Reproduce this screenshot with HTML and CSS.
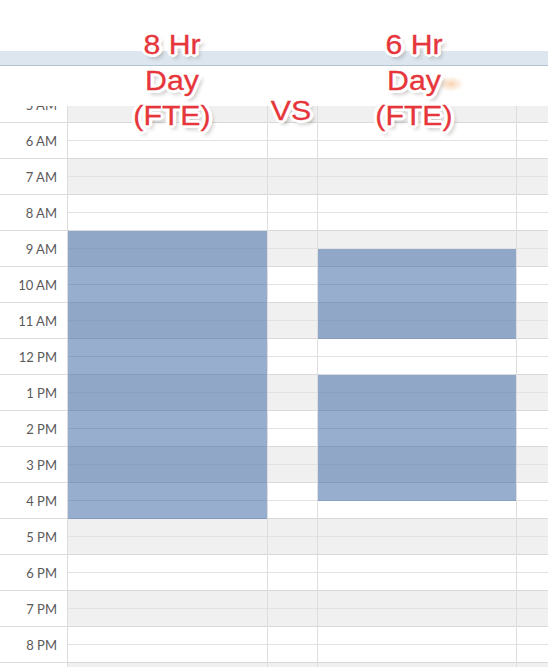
FILE: index.html
```html
<!DOCTYPE html>
<html>
<head>
<meta charset="utf-8">
<link rel="stylesheet" href="styles.css">
</head>
<body>
<div class="page">
  <div class="top"></div>
  <div class="band"></div>
  <div class="gap"></div>
  <div class="cal">
    <div class="inner">
      <div class="times">
        <div class="time">5 AM</div>
        <div class="time">6 AM</div>
        <div class="time">7 AM</div>
        <div class="time">8 AM</div>
        <div class="time">9 AM</div>
        <div class="time">10 AM</div>
        <div class="time">11 AM</div>
        <div class="time">12 PM</div>
        <div class="time">1 PM</div>
        <div class="time">2 PM</div>
        <div class="time">3 PM</div>
        <div class="time">4 PM</div>
        <div class="time">5 PM</div>
        <div class="time">6 PM</div>
        <div class="time">7 PM</div>
        <div class="time">8 PM</div>
        <div class="time">9 PM</div>
      </div>
      <div class="days">
        <div class="hour alt"><div class="half"></div></div>
        <div class="hour"><div class="half"></div></div>
        <div class="hour alt"><div class="half"></div></div>
        <div class="hour"><div class="half"></div></div>
        <div class="hour alt"><div class="half"></div></div>
        <div class="hour"><div class="half"></div></div>
        <div class="hour alt"><div class="half"></div></div>
        <div class="hour"><div class="half"></div></div>
        <div class="hour alt"><div class="half"></div></div>
        <div class="hour"><div class="half"></div></div>
        <div class="hour alt"><div class="half"></div></div>
        <div class="hour"><div class="half"></div></div>
        <div class="hour alt"><div class="half"></div></div>
        <div class="hour"><div class="half"></div></div>
        <div class="hour alt"><div class="half"></div></div>
        <div class="hour"><div class="half"></div></div>
        <div class="hour alt"><div class="half"></div></div>
        <div class="cols">
          <div class="col">
            <div class="event" style="top:144px;height:288px"></div>
          </div>
          <div class="col"></div>
          <div class="col">
            <div class="event" style="top:162px;height:90px"></div>
            <div class="event" style="top:288px;height:126px"></div>
          </div>
          <div class="col last"></div>
        </div>
      </div>
    </div>
  </div>
  <div class="smudge"></div>
  <div class="note note-8">8 Hr<br>Day<br>(FTE)</div>
  <div class="note note-vs">VS</div>
  <div class="note note-6">6 Hr<br>Day<br>(FTE)</div>
</div>
</body>
</html>
```

FILE: styles.css
```css
* { box-sizing: border-box; }
html, body { margin: 0; padding: 0; background: #fff; }
.page {
  position: relative;
  width: 548px;
  height: 667px;
  overflow: hidden;
  font-family: Lato, "Open Sans", sans-serif;
}
.top { height: 51px; background: #fff; }
.band {
  height: 15px;
  background: #dde6ee;
  border-bottom: 1px solid #b3c2d1;
}
.gap { height: 40px; background: #fff; }
.cal {
  height: 561px;
  overflow: hidden;
}
.inner {
  display: flex;
  margin-top: -19px;
}
.times {
  width: 68px;
  flex: none;
  border-right: 1px solid #dcdcdc;
}
.time {
  height: 36px;
  border-bottom: 1px solid #dcdcdc;
  display: flex;
  align-items: center;
  justify-content: flex-end;
  padding-right: 10px;
  font-size: 13px;
  color: #5a5a5a;
}
.days {
  position: relative;
  flex: 1;
}
.hour {
  height: 36px;
  border-bottom: 1px solid #d9d9d9;
  background: #fff;
}
.hour.alt { background: #f0f0f0; }
.half {
  height: 18px;
  border-bottom: 1px solid #e2e2e2;
}
.cols {
  position: absolute;
  top: 0;
  left: 0;
  right: 0;
  bottom: 0;
  display: grid;
  grid-template-columns: 200px 50px 199px 1fr;
}
.col {
  position: relative;
  border-right: 1px solid #dedede;
}
.col.last { border-right: none; }
.event {
  position: absolute;
  left: 0;
  right: 0;
  background: rgba(49, 93, 157, 0.5);
}
.note {
  position: absolute;
  font-family: "Liberation Sans", Arial, sans-serif;
  font-size: 27px;
  line-height: 35.5px;
  color: #e6363b;
  text-align: center;
  width: 200px;
  transform: scaleX(1.12);
  -webkit-text-stroke: 0.3px #e6363b;
  text-shadow:
    2px 0 0 #fff, -2px 0 0 #fff, 0 2px 0 #fff, 0 -2px 0 #fff,
    2px 2px 0 #fff, -2px -2px 0 #fff, 2px -2px 0 #fff, -2px 2px 0 #fff,
    3px 0 0 #fff, -3px 0 0 #fff, 0 3px 0 #fff, 0 -3px 0 #fff,
    3px 1px 0 #fff, -3px -1px 0 #fff, 1px 3px 0 #fff, -1px -3px 0 #fff,
    3px 4px 4px rgba(0, 0, 0, 0.35);
}
.note-8 { top: 28px; left: 72px; }
.note-6 { top: 28px; left: 314px; }
.note-vs { top: 94px; left: 191px; }
.smudge {
  position: absolute;
  left: 438px;
  top: 76px;
  width: 26px;
  height: 16px;
  border-radius: 50%;
  background: radial-gradient(ellipse at center, rgba(240, 160, 90, 0.45), rgba(240, 160, 90, 0) 70%);
}
```
